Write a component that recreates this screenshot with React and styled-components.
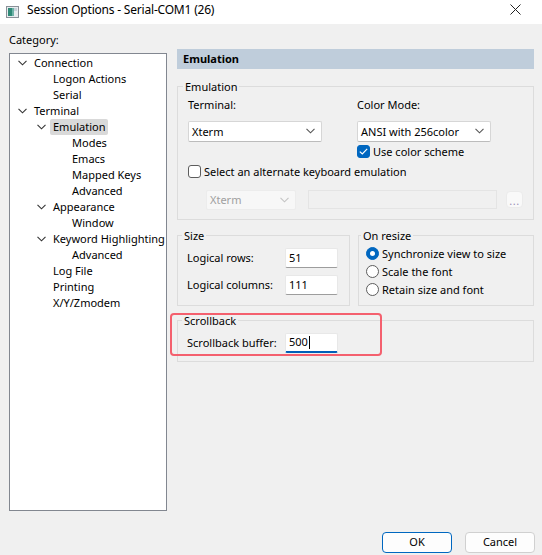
import React from 'react'
import styled, { createGlobalStyle } from 'styled-components'

const GlobalStyle = createGlobalStyle`
    html, body {
        margin: 0;
        padding: 0;
        background: #f0f0f0;
    }
    body {
        font-family: "Segoe UI", "Noto Sans", "Liberation Sans", sans-serif;
        font-size: 11px;
        color: #000;
    }
    * { box-sizing: border-box; }
`

const Window = styled.div`
    width: 542px;
    height: 555px;
    display: flex;
    flex-direction: column;
    position: relative;
    overflow: hidden;
`

const TitleBar = styled.div`
    height: 24px;
    background: #fff;
    display: flex;
    align-items: center;
    padding: 0 5px 0 6px;
    font-size: 12px;
    .title {
        margin-left: 8px;
        flex: 1;
        line-height: 16px;
        margin-top: -3px;
        letter-spacing: -0.2px;
    }
    .close {
        width: 44px;
        height: 24px;
        display: flex;
        align-items: center;
        justify-content: center;
        margin-top: -4px;
    }
`

const Main = styled.div`
    flex: 1;
    display: flex;
    padding-left: 9px;
    gap: 10px;
`

const LeftCol = styled.div`
    width: 158px;
    padding-top: 8px;
    display: flex;
    flex-direction: column;
    .label {
        line-height: 16px;
        margin-bottom: 5px;
    }
`

const Tree = styled.div`
    height: 458px;
    background: #fff;
    border: 1px solid #828790;
    padding-top: 1px;
`

const TreeRow = styled.div`
    height: 16px;
    display: flex;
    align-items: center;
    padding-left: ${p => 8 + p.level * 19}px;
    .chev {
        width: 9px;
        display: flex;
        justify-content: center;
        margin-right: 7px;
        visibility: ${p => (p.open ? 'visible' : 'hidden')};
    }
    .text {
        line-height: 16px;
        padding: 0 3px;
        margin-left: -3px;
        background: ${p => (p.selected ? '#d9d9d9' : 'transparent')};
        border-radius: 2px;
        white-space: nowrap;
    }
`

const RightCol = styled.div`
    width: 357px;
    padding-top: 25px;
    display: flex;
    flex-direction: column;
`

const Header = styled.div`
    height: 20px;
    background: #bfcddb;
    font-weight: 700;
    padding-left: 6px;
    line-height: 19px;
    margin-bottom: 10px;
`

const Group = styled.fieldset`
    margin: 0;
    border: 1px solid #dcdcdc;
    padding: ${p => p.pad || '2px 10px 9px 10px'};
    min-width: 0;
    legend {
        padding: 0 2px;
        margin-left: -5px;
        line-height: 16px;
    }
`

const TwoCols = styled.div`
    display: grid;
    grid-template-columns: ${p => p.cols};
    column-gap: ${p => p.gap || '0px'};
    margin-top: ${p => p.mt || '0px'};
`

const Label = styled.div`
    line-height: 16px;
    margin-bottom: ${p => p.mb || '0px'};
`

const Combo = styled.div`
    width: ${p => p.w}px;
    height: ${p => p.h || 21}px;
    background: ${p => (p.disabled ? '#f7f7f7' : '#fff')};
    border: 1px solid ${p => (p.disabled ? '#ececec' : '#d6d6d6')};
    border-bottom-color: ${p => (p.disabled ? '#ececec' : '#bcbcbc')};
    border-radius: 2px;
    display: flex;
    align-items: center;
    justify-content: space-between;
    padding: 0 6px 0 3px;
    color: ${p => (p.disabled ? '#a0a0a0' : '#000')};
`

const CheckRow = styled.div`
    height: ${p => p.h || 16}px;
    display: flex;
    align-items: center;
    gap: 3px;
    margin-top: ${p => p.mt || '0px'};
    white-space: nowrap;
`

const CheckBox = styled.span`
    width: 13px;
    height: 13px;
    border-radius: 3px;
    display: inline-flex;
    align-items: center;
    justify-content: center;
    background: ${p => (p.checked ? '#0067c0' : '#fff')};
    border: 1px solid ${p => (p.checked ? '#0067c0' : '#5d5d5d')};
`

const Radio = styled.span`
    width: 13px;
    height: 13px;
    border-radius: 50%;
    display: inline-flex;
    align-items: center;
    justify-content: center;
    background: ${p => (p.checked ? '#0067c0' : '#fff')};
    border: 1px solid ${p => (p.checked ? '#0067c0' : '#5d5d5d')};
    &::after {
        content: '';
        display: ${p => (p.checked ? 'block' : 'none')};
        width: 5px;
        height: 5px;
        border-radius: 50%;
        background: #fff;
    }
`

const DisabledRow = styled.div`
    display: flex;
    align-items: center;
    margin-top: 8px;
    padding-left: 18px;
    gap: 12px;
`

const DisabledField = styled.div`
    width: 190px;
    height: 19px;
    border: 1px solid #e4e4e4;
    background: #f0f0f0;
`

const DotsButton = styled.div`
    width: 17px;
    height: 17px;
    border-radius: 4px;
    background: #f9f9f9;
    border: 1px solid #ebebeb;
    margin-left: -3px;
    display: flex;
    align-items: flex-end;
    justify-content: center;
    color: #9a90b8;
    font-size: 11px;
    line-height: 12px;
    letter-spacing: 0.5px;
`

const Row = styled.div`
    display: flex;
    align-items: center;
    height: 20px;
    margin-bottom: ${p => p.mb || '0px'};
    .lbl {
        width: 98px;
    }
`

const Input = styled.div`
    width: 53px;
    height: 20px;
    background: #fff;
    border: 1px solid #e8e8e8;
    border-bottom: ${p => (p.focused ? '2px solid #005fb8' : '1px solid #9d9d9d')};
    border-radius: 2px;
    padding-left: 3px;
    line-height: 18px;
    display: flex;
    align-items: center;
    .caret {
        width: 1px;
        height: 13px;
        background: #000;
        margin-left: 1px;
    }
`

const Footer = styled.div`
    height: 45px;
    display: flex;
    justify-content: flex-end;
    align-items: flex-start;
    padding: 21px 7px 0 0;
    gap: 13px;
`

const Button = styled.div`
    width: 70px;
    height: 21px;
    border-radius: 4px;
    background: #fdfdfd;
    border: 1px solid ${p => (p.primary ? '#0067c0' : '#d0d0d0')};
    display: flex;
    align-items: center;
    justify-content: center;
    line-height: 16px;
`

const Highlight = styled.div`
    position: absolute;
    left: 170px;
    top: 313px;
    width: 212px;
    height: 43px;
    border: 2.5px solid #f4606e;
    border-radius: 4px;
    pointer-events: none;
`

const Chevron = ({ color = '#333' }) => (
    <svg width="9" height="6" viewBox="0 0 9 6">
        <path d="M0.5 0.8 L4.5 4.8 L8.5 0.8" fill="none" stroke={color} strokeWidth="1.1" />
    </svg>
)

const tree = [
    { t: 'Connection', l: 0, open: true },
    { t: 'Logon Actions', l: 1 },
    { t: 'Serial', l: 1 },
    { t: 'Terminal', l: 0, open: true },
    { t: 'Emulation', l: 1, open: true, selected: true },
    { t: 'Modes', l: 2 },
    { t: 'Emacs', l: 2 },
    { t: 'Mapped Keys', l: 2 },
    { t: 'Advanced', l: 2 },
    { t: 'Appearance', l: 1, open: true },
    { t: 'Window', l: 2 },
    { t: 'Keyword Highlighting', l: 1, open: true },
    { t: 'Advanced', l: 2 },
    { t: 'Log File', l: 1 },
    { t: 'Printing', l: 1 },
    { t: 'X/Y/Zmodem', l: 1 },
]

const App = () => {
    return (
        <Window>
            <GlobalStyle />
            <TitleBar>
                <svg width="13" height="12" viewBox="0 0 13 12">
                    <rect x="0.5" y="0.5" width="12" height="11" fill="#e8ecef" stroke="#8a9098" />
                    <rect x="2" y="2" width="4" height="8" fill="#2f8a78" />
                    <rect x="6" y="2" width="2" height="8" fill="#6fb3a8" />
                    <rect x="8" y="2" width="3" height="3" fill="#c8d2da" />
                </svg>
                <span className="title">Session Options - Serial-COM1 (26)</span>
                <span className="close">
                    <svg width="11" height="11" viewBox="0 0 11 11">
                        <path d="M0.5 0.5 L10.5 10.5 M10.5 0.5 L0.5 10.5" stroke="#222" strokeWidth="1" />
                    </svg>
                </span>
            </TitleBar>

            <Main>
                <LeftCol>
                    <div className="label">Category:</div>
                    <Tree>
                        {tree.map((n, i) => (
                            <TreeRow key={i} level={n.l} open={n.open} selected={n.selected}>
                                <span className="chev"><Chevron /></span>
                                <span className="text">{n.t}</span>
                            </TreeRow>
                        ))}
                    </Tree>
                </LeftCol>

                <RightCol>
                    <Header>Emulation</Header>

                    <Group>
                        <legend>Emulation</legend>
                        <TwoCols cols="169px 1fr">
                            <div>
                                <Label mb="8px">Terminal:</Label>
                                <Combo w={134}>
                                    <span>Xterm</span>
                                    <Chevron color="#555" />
                                </Combo>
                            </div>
                            <div>
                                <Label mb="8px">Color Mode:</Label>
                                <Combo w={134}>
                                    <span>ANSI with 256color</span>
                                    <Chevron color="#555" />
                                </Combo>
                                <CheckRow h={18} mt="1px">
                                    <CheckBox checked>
                                        <svg width="9" height="7" viewBox="0 0 9 7">
                                            <path d="M0.8 3.6 L3.3 6 L8.2 0.9" fill="none" stroke="#fff" strokeWidth="1.2" />
                                        </svg>
                                    </CheckBox>
                                    <span>Use color scheme</span>
                                </CheckRow>
                            </div>
                        </TwoCols>
                        <CheckRow h={20} mt="1px">
                            <CheckBox />
                            <span>Select an alternate keyboard emulation</span>
                        </CheckRow>
                        <DisabledRow>
                            <Combo w={90} h={20} disabled>
                                <span>Xterm</span>
                                <Chevron color="#c4c4c4" />
                            </Combo>
                            <DisabledField />
                            <DotsButton>...</DotsButton>
                        </DisabledRow>
                    </Group>

                    <TwoCols cols="173px 1fr" gap="8px" mt="8px">
                        <Group pad="4px 10px 10px 9px">
                            <legend>Size</legend>
                            <Row mb="7px">
                                <span className="lbl">Logical rows:</span>
                                <Input>51</Input>
                            </Row>
                            <Row>
                                <span className="lbl">Logical columns:</span>
                                <Input>111</Input>
                            </Row>
                        </Group>
                        <Group pad="1px 8px 6px 7px">
                            <legend>On resize</legend>
                            <CheckRow h={18}>
                                <Radio checked />
                                <span>Synchronize view to size</span>
                            </CheckRow>
                            <CheckRow h={18}>
                                <Radio />
                                <span>Scale the font</span>
                            </CheckRow>
                            <CheckRow h={18}>
                                <Radio />
                                <span>Retain size and font</span>
                            </CheckRow>
                        </Group>
                    </TwoCols>

                    <Group pad="4px 10px 8px 9px" style={{ marginTop: 7 }}>
                        <legend>Scrollback</legend>
                        <Row>
                            <span className="lbl">Scrollback buffer:</span>
                            <Input focused>500<span className="caret" /></Input>
                        </Row>
                    </Group>
                </RightCol>
            </Main>

            <Footer>
                <Button primary>OK</Button>
                <Button>Cancel</Button>
            </Footer>

            <Highlight />
        </Window>
    )
}

export default App
